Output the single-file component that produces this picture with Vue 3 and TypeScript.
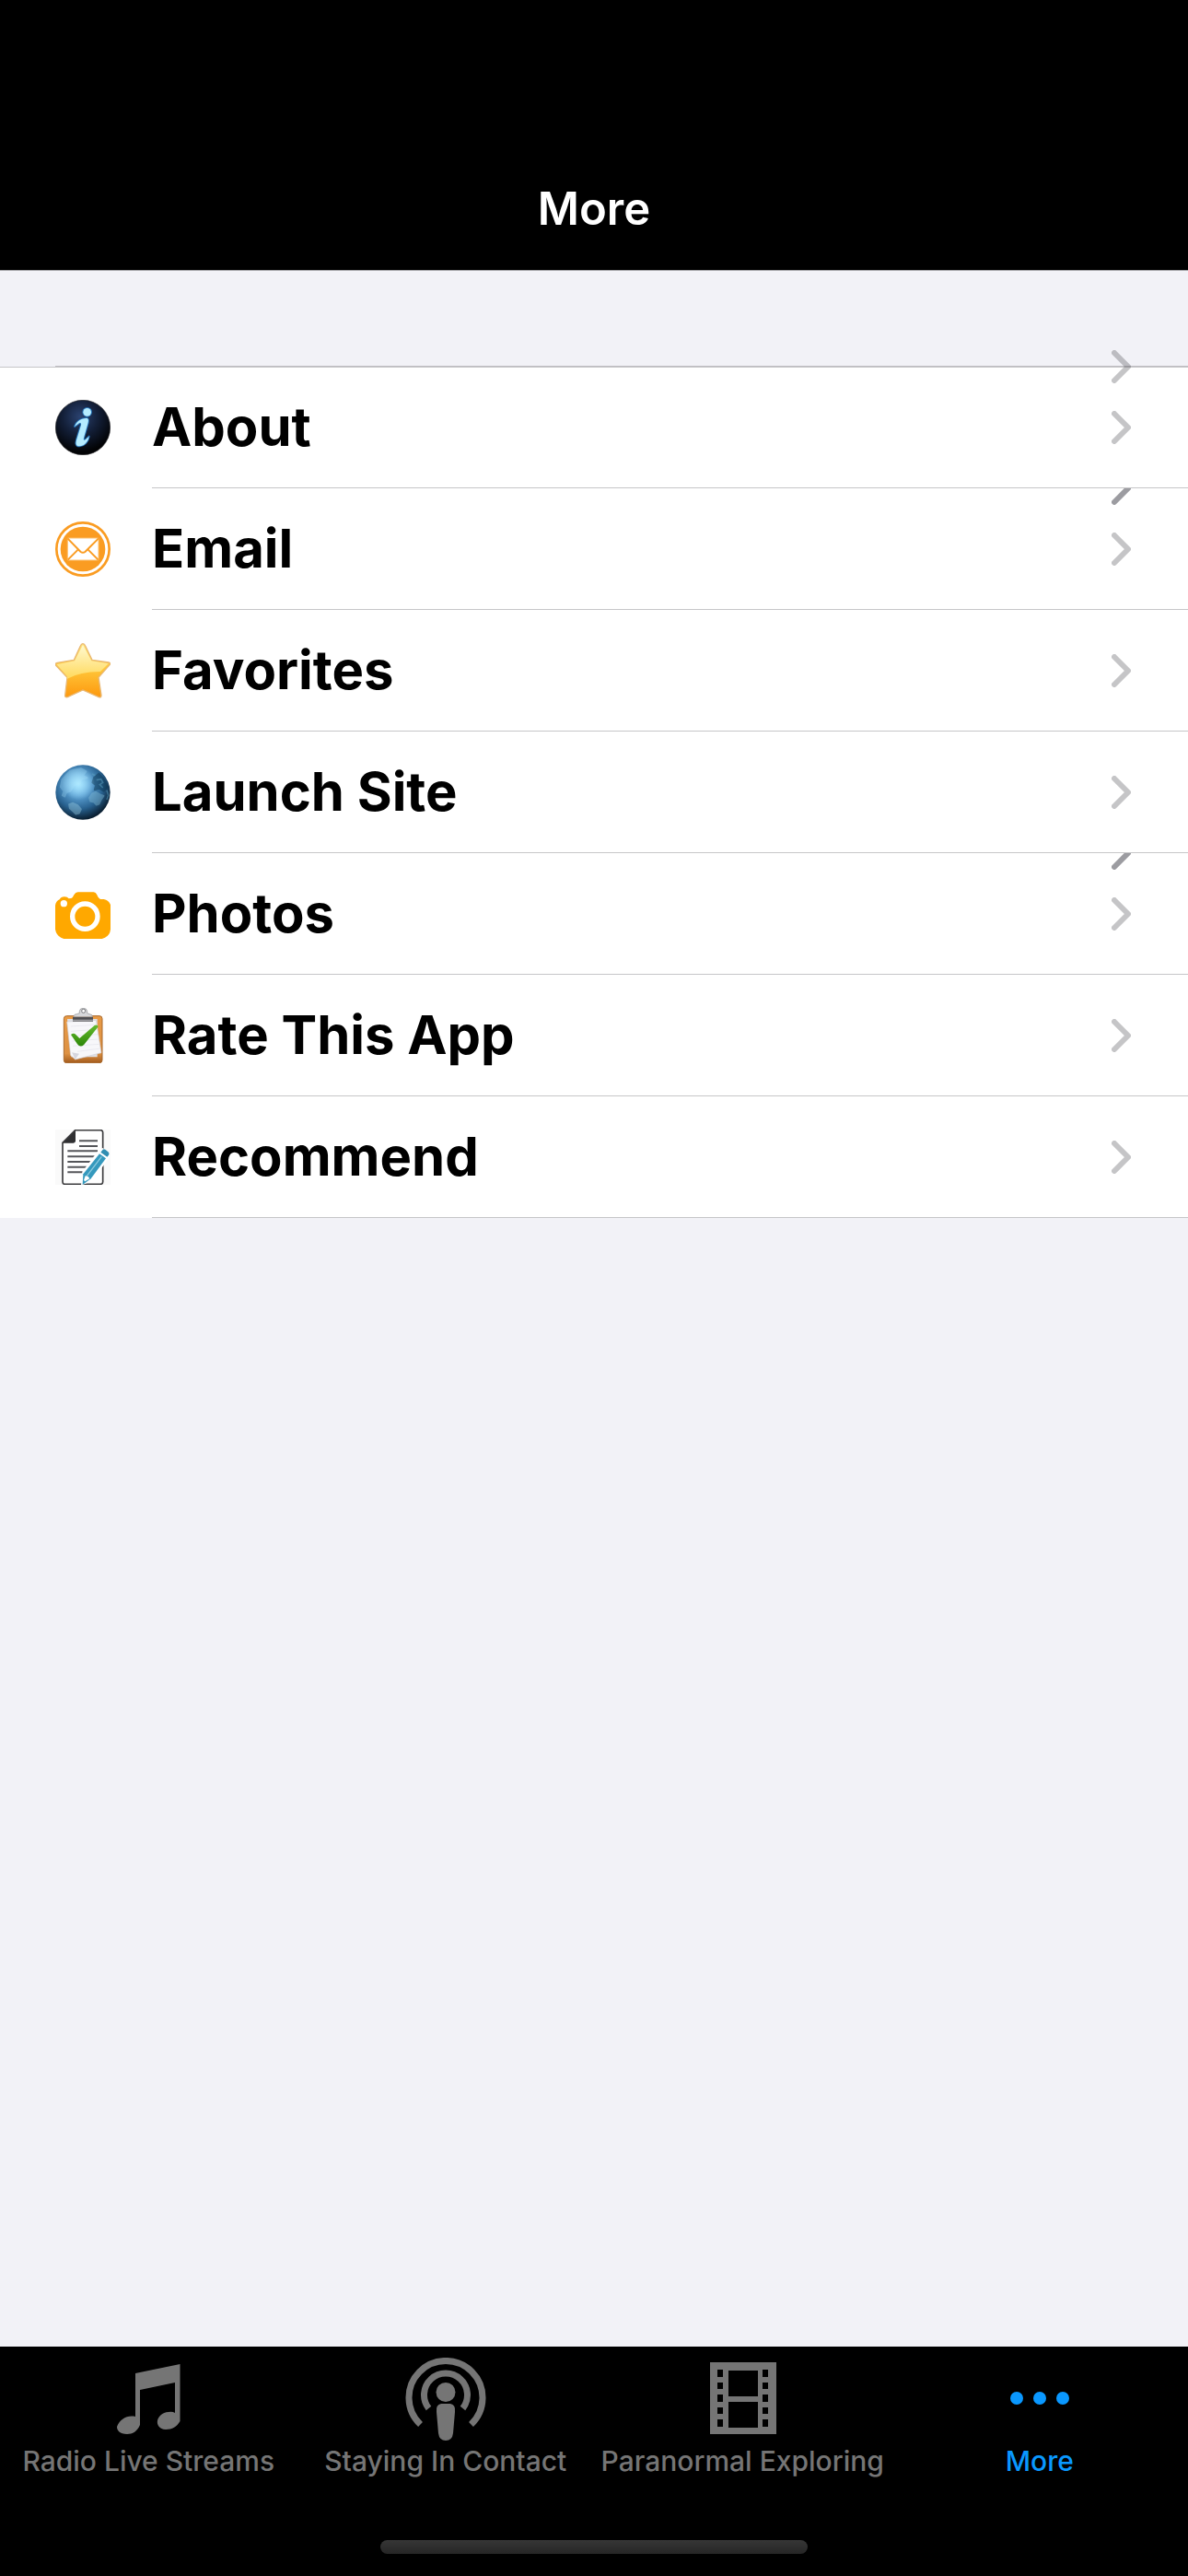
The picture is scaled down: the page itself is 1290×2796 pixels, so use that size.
<script setup lang="ts">
type RowIcon = 'about' | 'email' | 'favorites' | 'site' | 'photos' | 'rate' | 'recommend'
type TabIcon = 'music' | 'podcast' | 'film' | 'more'

interface Row {
  icon: RowIcon
  label: string
  ghost?: boolean
}

interface Tab {
  icon: TabIcon
  label: string
  active?: boolean
}

const rows: Row[] = [
  { icon: 'about', label: 'About' },
  { icon: 'email', label: 'Email', ghost: true },
  { icon: 'favorites', label: 'Favorites' },
  { icon: 'site', label: 'Launch Site' },
  { icon: 'photos', label: 'Photos', ghost: true },
  { icon: 'rate', label: 'Rate This App' },
  { icon: 'recommend', label: 'Recommend' },
]

const tabs: Tab[] = [
  { icon: 'music', label: 'Radio Live Streams' },
  { icon: 'podcast', label: 'Staying In Contact' },
  { icon: 'film', label: 'Paranormal Exploring' },
  { icon: 'more', label: 'More', active: true },
]
</script>

<template>
  <div class="screen">
    <header class="navbar">
      <h1 class="title">More</h1>
    </header>

    <main class="content">
      <div class="spacer">
        <svg class="chevron loose" viewBox="0 0 21 36" aria-hidden="true">
          <path d="M3 3 L18 18 L3 33" />
        </svg>
      </div>
      <ul class="list">
        <li v-for="row in rows" :key="row.label">
          <a class="row" href="#">
            <svg class="row-icon" viewBox="0 0 180 180" aria-hidden="true">
              <template v-if="row.icon === 'about'">
                <defs>
                  <radialGradient id="orb" cx="0.45" cy="0.3" r="0.65">
                    <stop offset="0" stop-color="#2a4270" />
                    <stop offset="0.5" stop-color="#131f38" />
                    <stop offset="1" stop-color="#020305" />
                  </radialGradient>
                </defs>
                <circle cx="90" cy="90" r="89" fill="url(#orb)" stroke="#2b2b2e" stroke-width="2" />
                <g stroke="#2673b8" stroke-width="6" fill="#b5ecff" stroke-linejoin="round" paint-order="stroke">
                  <circle cx="104" cy="40" r="13" />
                  <path d="M63 87 C70 70 82 61 101 60 C108 60 109 66 107 74 L93 124 C91 132 94 133 100 128 L110 119 C108 136 94 150 79 151 C67 151 66 142 69 131 L84 82 C86 74 80 73 75 78 Z" />
                </g>
              </template>

              <template v-else-if="row.icon === 'email'">
                <circle cx="90" cy="90" r="86" fill="#fff" stroke="#fa9c22" stroke-width="8" />
                <circle cx="90" cy="90" r="73" fill="#fa9c22" />
                <rect x="40" y="54" width="101" height="72" rx="2" fill="#fff" stroke="#fcc170" stroke-width="3" />
                <path d="M40 55 L82 98 Q90 105 98 98 L141 55 M41 125 L74 92 M140 125 L107 92" fill="none" stroke="#fa9c22" stroke-width="6" />
              </template>

              <template v-else-if="row.icon === 'favorites'">
                <defs>
                  <linearGradient id="star" x1="0" y1="0" x2="0" y2="1">
                    <stop offset="0" stop-color="#ffe680" />
                    <stop offset="0.45" stop-color="#ffc83c" />
                    <stop offset="1" stop-color="#fd980d" />
                  </linearGradient>
                  <linearGradient id="gloss" x1="0" y1="0" x2="0" y2="1">
                    <stop offset="0" stop-color="#fff9d0" />
                    <stop offset="1" stop-color="#ffd95c" />
                  </linearGradient>
                </defs>
                <path d="M90 2 Q95 2 98 9 L120 55 L174 63 Q182 65 177 71 L141 112 L150 170 Q150 179 142 176 L90 153 L40 176 Q31 178 32 170 L39 112 L3 74 Q-2 66 6 64 L61 55 L82 9 Q85 2 90 2 Z" fill="url(#star)" stroke="#e9b873" stroke-width="4" />
                <path d="M90 6 L118 58 L173 67 L147 93 Q85 92 39 116 L38 108 L5 70 L63 58 Z" fill="url(#gloss)" />
              </template>

              <template v-else-if="row.icon === 'site'">
                <defs>
                  <radialGradient id="globe" cx="0.42" cy="0.36" r="0.64">
                    <stop offset="0" stop-color="#8bd6ff" />
                    <stop offset="0.3" stop-color="#5fa5d8" />
                    <stop offset="0.7" stop-color="#28618f" />
                    <stop offset="1" stop-color="#0a2033" />
                  </radialGradient>
                  <radialGradient id="shine" cx="0.42" cy="0.34" r="0.3">
                    <stop offset="0" stop-color="#b4ecff" stop-opacity="0.8" />
                    <stop offset="1" stop-color="#b4ecff" stop-opacity="0" />
                  </radialGradient>
                </defs>
                <circle cx="90" cy="90" r="89" fill="url(#globe)" />
                <g stroke-linejoin="round" stroke-width="5">
                  <path d="M22 48 L48 20 L84 12 L101 22 L91 35 L104 43 L84 48 L80 62 L62 67 L50 86 L36 91 L31 104 L23 100 L28 86 L17 73 Z" fill="#a5defa" stroke="#a5defa" opacity="0.3" />
                  <path d="M45 129 L58 125 L73 132 L84 145 L78 158 L67 161 L58 152 L47 142 Z" fill="#a5d6e8" stroke="#a5d6e8" opacity="0.38" />
                  <path d="M120 94 L132 89 L146 97 L158 101 L150 113 L143 128 L134 131 L126 122 L114 119 L111 108 Z" fill="#8cc4db" stroke="#8cc4db" opacity="0.38" />
                  <path d="M126 42 L142 29 L157 45 L170 72 L158 86 L144 78 L128 82 L132 67 L121 58 Z" fill="#08314b" stroke="#08314b" opacity="0.45" />
                </g>
                <path d="M134 50 L149 47 L155 58 L145 65 L155 75 M168 83 L173 100 L168 114 M120 30 L130 35" fill="none" stroke="#5b9fc0" stroke-width="5" opacity="0.5" />
                <circle cx="90" cy="90" r="89" fill="url(#shine)" />
              </template>

              <template v-else-if="row.icon === 'photos'">
                <path d="M0 62 Q2 48 14 43 Q18 34 30 34 Q40 34 44 40 L52 39 Q58 36 61 28 Q66 19 74 19 H125 Q132 19 136 28 Q141 41 148 42 H158 Q174 45 180 60 V140 Q178 164 152 171 H28 Q4 164 0 140 Z" fill="#ffa800" />
                <circle cx="28" cy="56" r="11" fill="#fff" />
                <circle cx="97" cy="98" r="41" fill="none" stroke="#fff" stroke-width="16" />
              </template>

              <template v-else-if="row.icon === 'rate'">
                <defs>
                  <linearGradient id="board" x1="0" y1="0" x2="0" y2="1">
                    <stop offset="0" stop-color="#e89a45" />
                    <stop offset="0.8" stop-color="#dd9143" />
                    <stop offset="1" stop-color="#a35b1d" />
                  </linearGradient>
                  <linearGradient id="tick" x1="0" y1="0" x2="0" y2="1">
                    <stop offset="0" stop-color="#65bb2e" />
                    <stop offset="1" stop-color="#2c8608" />
                  </linearGradient>
                </defs>
                <rect x="28" y="26" width="125" height="153" rx="9" fill="url(#board)" stroke="#a9692d" stroke-width="3" />
                <path d="M39 36 H137 V160 H52 Z" fill="#dfe0e5" />
                <path d="M38 45 L133 40 L150 146 L65 168 L50 154 Z" fill="#f7f7fa" stroke="#cfcfd6" stroke-width="2" />
                <path d="M54 145 L78 149 L65 167 Z" fill="#d6d6df" />
                <path d="M50 60 L132 55 M51 76 L135 70 M53 92 L138 86 M55 108 L140 102 M57 124 L143 118 M72 142 L146 132" stroke="#e4e4ec" stroke-width="2" />
                <path d="M57 30 H123 V45 H57 Z" fill="#4d4d50" />
                <path d="M57 38 H123 V44 H57 Z" fill="#9d9da1" />
                <path d="M60 29 Q59 21 71 20 L79 17 V11 Q80 1 91 1 Q103 1 104 11 V17 L111 20 Q122 21 121 29 Z" fill="#d6d7da" stroke="#8b8c90" stroke-width="2" />
                <circle cx="92" cy="10" r="6" fill="#fff" stroke="#77787c" stroke-width="3" />
                <path d="M51 87 Q60 80 67 87 L79 99 L128 57 Q137 53 140 61 L94 119 Q82 131 72 118 Z" fill="url(#tick)" />
              </template>

              <template v-else>
                <rect width="180" height="180" fill="#fafafa" />
                <path d="M65 2 H148 Q155 2 155 10 V170 Q155 178 147 178 H31 Q24 178 24 170 V43 Z" fill="#fff" stroke="#3c3c3e" stroke-width="5" />
                <path d="M66 2 V37 Q66 44 59 44 H24 Z" fill="#303032" />
                <path d="M78 37 H138 M78 54 H138 M40 70 H138 M40 88 H129 M40 105 H118 M40 122 H104 M40 139 H91" stroke="#55565a" stroke-width="6" />
                <path d="M154 60 L178 77 L176 92 L119 168 L84 182 L88 137 L142 66 Z" fill="#fff" />
                <path d="M155 65 Q158 62 163 65 L174 74 Q177 78 174 83 L169 89 L148 74 Z" fill="#318eb2" />
                <path d="M144 79 L165 94 L116 160 L89 180 L91 145 Z" fill="#3599bd" />
                <path d="M151 88 L103 151" stroke="#8ecadf" stroke-width="4" />
                <path d="M98 151 Q107 149 112 160 L97 169 L93 165 Z" fill="#fff" />
              </template>
            </svg>
            <span class="row-body">
              <span class="row-label">{{ row.label }}</span>
              <svg class="chevron" viewBox="0 0 21 36" aria-hidden="true">
                <path d="M3 3 L18 18 L3 33" />
              </svg>
            </span>
            <svg v-if="row.ghost" class="ghost" viewBox="0 18 21 18" aria-hidden="true">
              <path d="M3 3 L18 18 L3 33" />
            </svg>
          </a>
        </li>
      </ul>
    </main>

    <nav class="tabbar">
      <div class="tabs">
        <a v-for="tab in tabs" :key="tab.label" href="#" class="tab" :class="{ active: tab.active }">
          <svg class="tab-icon" viewBox="0 0 90 90" aria-hidden="true">
            <path v-if="tab.icon === 'music'" d="M31 17 L79.500 7 V69 C76 75 71 78 64 78 C50 77 53 60 67 59 Q71 58 74 60 V27 L36 35 V73 C33 80 28 83 22 83 C14 83 11 79 11 75 C14 67 22 62 31 64 Z" />
            <template v-else-if="tab.icon === 'podcast'">
              <path class="arc" d="M17.500 72.500 A40 40 0 1 1 72.500 72.500" />
              <path class="arc" d="M26.500 55 A23.500 23.500 0 1 1 63.500 55" />
              <circle cx="45" cy="37.500" r="10.500" />
              <path d="M40 50 H50 Q56 51 55 59 L53 82 Q52 90 45 90 Q38 90 37 82 L35 59 Q34 51 40 50 Z" />
            </template>
            <path v-else-if="tab.icon === 'film'" fill-rule="evenodd" d="M10 5 H82 V83 H10 Z M30 14 V42 H62 V14 Z M30 48 V76 H62 V48 Z M18 13 h6 v8 h-6 Z m0 14 h6 v7 h-6 Z m0 13 h6 v8 h-6 Z m0 14 h6 v7 h-6 Z m0 13 h6 v8 h-6 Z M67 13 h6 v8 h-6 Z m0 14 h6 v7 h-6 Z m0 13 h6 v8 h-6 Z m0 14 h6 v7 h-6 Z m0 13 h6 v8 h-6 Z" />
            <template v-else>
              <circle cx="20" cy="44" r="7" />
              <circle cx="45" cy="44" r="7" />
              <circle cx="70" cy="44" r="7" />
            </template>
          </svg>
          <span class="tab-label">{{ tab.label }}</span>
        </a>
      </div>
      <div class="home-indicator"></div>
    </nav>
  </div>
</template>

<style>
body {
  margin: 0;
  background: #f2f2f7;
}
</style>

<style scoped>
.screen {
  display: flex;
  flex-direction: column;
  min-height: 100vh;
  background: #f2f2f7;
  font-family: Inter, 'Liberation Sans', sans-serif;
}

.navbar {
  padding: 195px 0 34px;
  background: #000;
  border-bottom: 1px solid #a6a6aa;
}

.title {
  margin: 0;
  color: #fff;
  font-size: 49px;
  font-weight: 600;
  line-height: 64px;
  text-align: center;
}

.content {
  flex: 1;
}

.spacer {
  position: relative;
  height: 103px;
  margin-left: 60px;
  border-bottom: 1px solid #bebdc2;
}

.list {
  margin: 0;
  padding: 0;
  list-style: none;
  background: #fff;
  box-shadow: inset 0 1px #c6c6c8;
}

.row {
  position: relative;
  display: flex;
  align-items: center;
  height: 132px;
  padding-left: 60px;
  color: #000;
  text-decoration: none;
}

.row-icon {
  flex: none;
  width: 60px;
  height: 60px;
  margin-right: 45px;
}

.row-body {
  display: flex;
  flex: 1;
  align-items: center;
  justify-content: space-between;
  box-sizing: border-box;
  height: 100%;
  padding-right: 62px;
  border-bottom: 1px solid #c6c6c8;
}

.row-label {
  padding-bottom: 2px;
  font-size: 58px;
  font-weight: 700;
  line-height: 72px;
}

.chevron {
  flex: none;
  width: 21px;
  height: 36px;
  fill: none;
  stroke: #c5c5c7;
  stroke-width: 6;
  stroke-linecap: round;
  stroke-linejoin: round;
}

.loose {
  position: absolute;
  right: 62px;
  bottom: -19px;
  stroke: #3c3c434c;
}

.ghost {
  position: absolute;
  top: 0;
  right: 62px;
  width: 21px;
  height: 18px;
  fill: none;
  stroke: #9c9ca1;
  stroke-width: 6;
  stroke-linecap: round;
  stroke-linejoin: round;
}

.tabbar {
  background: #000;
}

.tabs {
  display: grid;
  grid-template-columns: repeat(4, 1fr);
}

.tab {
  display: flex;
  flex-direction: column;
  align-items: center;
  padding-top: 12px;
  color: #757575;
  text-decoration: none;
}

.tab.active {
  color: #0a98ff;
}

.tab-icon {
  width: 90px;
  height: 90px;
  fill: currentColor;
}

.arc {
  fill: none;
  stroke: currentColor;
  stroke-width: 7;
}

.tab-label {
  font-size: 30px;
  font-weight: 500;
  line-height: 44px;
  white-space: nowrap;
}

.home-indicator {
  width: 36%;
  height: 15px;
  margin: 64px auto 24px;
  border-radius: 8px;
  background: linear-gradient(#363636, #262626);
}
</style>
